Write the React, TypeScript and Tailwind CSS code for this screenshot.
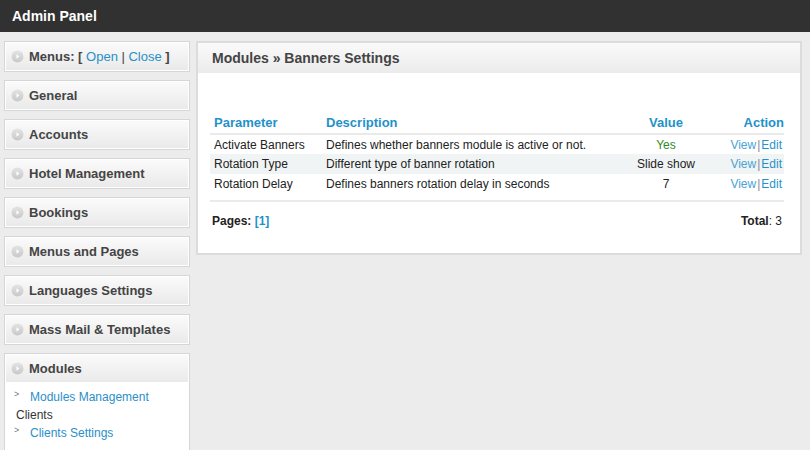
import React from "react";

const menus = [
  "General",
  "Accounts",
  "Hotel Management",
  "Bookings",
  "Menus and Pages",
  "Languages Settings",
  "Mass Mail & Templates",
];

const rows = [
  { param: "Activate Banners", desc: "Defines whether banners module is active or not.", value: "Yes", green: true },
  { param: "Rotation Type", desc: "Different type of banner rotation", value: "Slide show", green: false },
  { param: "Rotation Delay", desc: "Defines banners rotation delay in seconds", value: "7", green: false },
];

function Bullet() {
  return (
    <svg width="13" height="13" viewBox="0 0 13 13" className="shrink-0">
      <defs>
        <linearGradient id="bg" x1="0" y1="0" x2="0" y2="1">
          <stop offset="0" stopColor="#e4e4e4" />
          <stop offset="1" stopColor="#c8c8c8" />
        </linearGradient>
      </defs>
      <circle cx="6.5" cy="6.5" r="6" fill="url(#bg)" />
      <path d="M5.5 4.2 L8.3 6.5 L5.5 8.8 Z" fill="#ffffff" />
    </svg>
  );
}

function MenuBox({ children }: { children: React.ReactNode }) {
  return (
    <div className="h-[31px] border border-[#d6d6d6] shadow-[inset_0_0_0_1px_#ffffff] bg-gradient-to-b from-[#fbfbfb] to-[#e9e9e9] flex items-center gap-[5px] pl-[6px] text-[13px] font-bold text-[#444]">
      <Bullet />
      {children}
    </div>
  );
}

export default function App() {
  return (
    <div className="min-h-screen bg-[#ececec] font-['Liberation_Sans',Arial,sans-serif] overflow-hidden h-[450px]">
      {/* Top bar */}
      <div className="h-[32px] bg-[#313131] flex items-center pl-[12px] text-[14px] font-bold text-white">
        Admin Panel
      </div>

      <div className="flex gap-[6px] pl-[4px] pt-[9px]">
        {/* Sidebar */}
        <div className="w-[186px] flex flex-col gap-[8px] shrink-0">
          <MenuBox>
            <span>
              Menus: [ <a className="font-normal text-[#2b8fc8]">Open</a>
              <span className="font-normal"> | </span>
              <a className="font-normal text-[#2b8fc8]">Close</a> ]
            </span>
          </MenuBox>
          {menus.map((m) => (
            <MenuBox key={m}>{m}</MenuBox>
          ))}
          <div className="border border-[#d6d6d6] bg-white h-[120px]">
            <div className="h-[29px] shadow-[inset_0_0_0_1px_#ffffff] bg-gradient-to-b from-[#fbfbfb] to-[#e9e9e9] flex items-center gap-[5px] pl-[6px] text-[13px] font-bold text-[#444]">
              <Bullet />
              Modules
            </div>
            <div className="pt-[5px] text-[12px] leading-[18px]">
              <div className="flex items-start pl-[9px]">
                <span className="text-[9px] leading-[12px] text-[#777] w-[16px]">&gt;</span>
                <a className="text-[#2b8fc8]">Modules Management</a>
              </div>
              <div className="pl-[11px] text-[#333]">Clients</div>
              <div className="flex items-start pl-[9px]">
                <span className="text-[9px] leading-[12px] text-[#777] w-[16px]">&gt;</span>
                <a className="text-[#2b8fc8]">Clients Settings</a>
              </div>
            </div>
          </div>
        </div>

        {/* Main panel */}
        <div className="w-[606px] h-[214px] border-2 border-[#dcdcdc] bg-white self-start">
          <div className="h-[30px] bg-gradient-to-b from-[#fafafa] to-[#ebebeb] flex items-center pl-[14px] text-[14px] font-bold text-[#444]">
            Modules » Banners Settings
          </div>
          <div className="pl-[12px] pr-[16px] pt-[39px]">
            <table className="w-full border-collapse text-[12px] text-[#222]">
              <thead>
                <tr className="h-[22px] border-b-2 border-[#eaeaea] text-[13px] font-bold text-[#1f92c9]">
                  <th className="text-left font-bold pl-[4px] w-[116px]">Parameter</th>
                  <th className="text-left font-bold">Description</th>
                  <th className="text-center font-bold w-[100px]">Value</th>
                  <th className="text-right font-bold w-[68px]">Action</th>
                </tr>
              </thead>
              <tbody>
                {rows.map((r, i) => (
                  <tr key={r.param} className={`h-[20px] ${i === 1 ? "bg-[#f1f4f4]" : ""}`}>
                    <td className="pl-[4px]">{r.param}</td>
                    <td>{r.desc}</td>
                    <td className={`text-center ${r.green ? "text-[#2e8b22]" : ""}`}>{r.value}</td>
                    <td className="text-right pr-[2px]">
                      <a className="text-[#4aa3d3]">View</a>
                      <span className="text-[#888] px-[1px]">|</span>
                      <a className="text-[#1f92c9]">Edit</a>
                    </td>
                  </tr>
                ))}
              </tbody>
            </table>
            <div className="mt-[6px] border-t-2 border-[#eaeaea] flex justify-between pt-[10px] px-[2px] text-[12px] text-[#222]">
              <span className="font-bold">
                Pages: <a className="text-[#1f92c9]">[1]</a>
              </span>
              <span>
                <span className="font-bold">Total</span>: 3
              </span>
            </div>
          </div>
        </div>
      </div>
    </div>
  );
}
